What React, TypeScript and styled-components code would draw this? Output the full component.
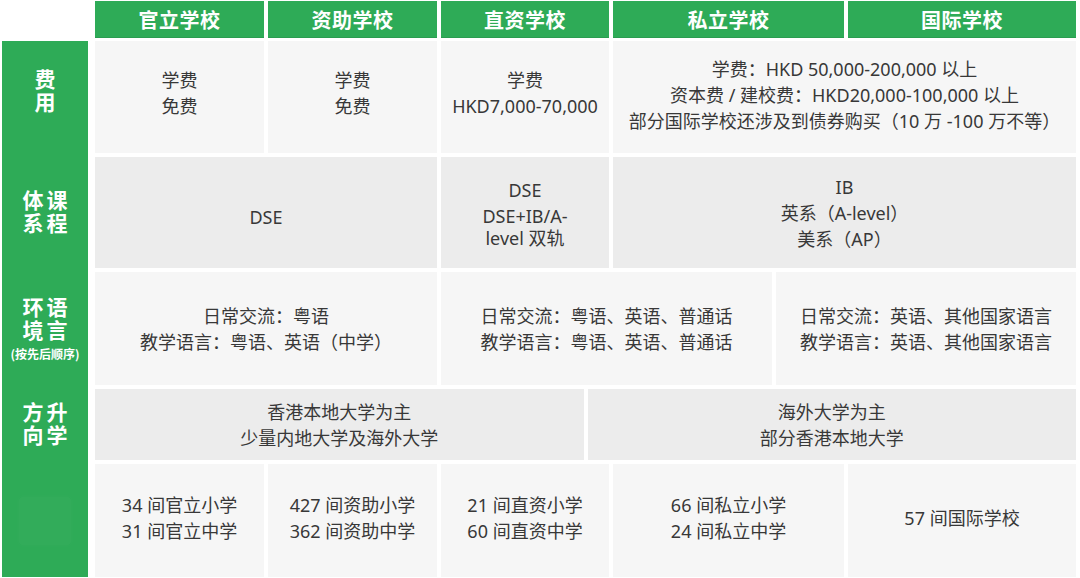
import React from "react";
import styled, { createGlobalStyle } from "styled-components";

const GREEN = "#2eab57";
const COLS = "169px 169px 168px 231px 1fr";

const GlobalStyle = createGlobalStyle`
  html, body {
    margin: 0;
    padding: 0;
    background: #ffffff;
  }
  body {
    font-family: "Noto Sans", "Noto Sans CJK SC", sans-serif;
  }
`;

const Page = styled.div`
  width: 1080px;
  height: 578px;
  box-sizing: border-box;
  padding: 1px 4px 1px 2px;
  display: grid;
  grid-template-columns: 86px 1fr;
  grid-template-rows: 37px 1fr;
  column-gap: 7px;
  row-gap: 3px;
`;

const HeaderRow = styled.div`
  grid-column: 2;
  grid-row: 1;
  display: grid;
  grid-template-columns: ${COLS};
  gap: 4px;
`;

const HeaderCell = styled.div`
  background: ${GREEN};
  color: #ffffff;
  font-family: "Noto Sans CJK SC", sans-serif;
  font-weight: 700;
  font-size: 20px;
  letter-spacing: 0.5px;
  display: flex;
  align-items: center;
  justify-content: center;
  box-shadow: inset 0 -1px 0 rgba(0, 0, 0, 0.08);
`;

const LabelColumn = styled.div`
  grid-column: 1;
  grid-row: 2;
  background: ${GREEN};
  display: grid;
  grid-template-rows: 112px 111px 113px 71px 113px;
  row-gap: 4px;
`;

const Label = styled.div<{ $lift?: number }>`
  display: flex;
  flex-direction: column;
  align-items: center;
  justify-content: center;
  padding-bottom: ${({ $lift }) => $lift ?? 0}px;
  color: #ffffff;
  font-family: "Noto Sans CJK SC", sans-serif;
  font-weight: 700;
  text-align: center;
`;

/* vertical text, read right column first: 课程体系 -> 课程 | 体系 */
const LabelText = styled.div`
  writing-mode: vertical-rl;
  height: 47px;
  font-size: 21px;
  line-height: 24px;
  letter-spacing: 2px;
`;

const Caption = styled.div`
  font-size: 12px;
  line-height: 14px;
  margin-top: 3px;
  white-space: nowrap;
`;

const Watermark = styled.div`
  width: 52px;
  height: 48px;
  border-radius: 4px;
  background: rgba(255, 255, 255, 0.025);
  box-shadow: 0 0 6px rgba(255, 255, 255, 0.03);
`;

const Body = styled.div`
  grid-column: 2;
  grid-row: 2;
  display: grid;
  grid-template-rows: 112px 111px 113px 71px 113px;
  row-gap: 4px;
`;

const Row = styled.div<{ $cols: string }>`
  display: grid;
  grid-template-columns: ${({ $cols }) => $cols};
  gap: 4px;
`;

const Cell = styled.div<{ $span?: number; $dark?: boolean; $lift?: number }>`
  grid-column: span ${({ $span }) => $span ?? 1};
  background: ${({ $dark }) => ($dark ? "#ececec" : "#f6f6f6")};
  display: flex;
  flex-direction: column;
  align-items: center;
  justify-content: center;
  padding-bottom: ${({ $lift }) => Math.max($lift ?? 0, 0)}px;
  padding-top: ${({ $lift }) => Math.max(-($lift ?? 0), 0)}px;
  color: #383838;
  font-size: 18px;
  line-height: 26px;
  text-align: center;
  white-space: nowrap;
`;

const Wrapped = styled.div`
  line-height: 22px;
  margin-top: 2px;
`;

const headers = ["官立学校", "资助学校", "直资学校", "私立学校", "国际学校"];

const labels: { text: string; caption?: string; lift?: number }[] = [
  { text: "费用", lift: 10 },
  { text: "课程体系" },
  { text: "语言环境", caption: "(按先后顺序)" },
  { text: "升学方向" },
];

const counts: string[][] = [
  ["34 间官立小学", "31 间官立中学"],
  ["427 间资助小学", "362 间资助中学"],
  ["21 间直资小学", "60 间直资中学"],
  ["66 间私立小学", "24 间私立中学"],
  ["57 间国际学校"],
];

const Lines: React.FC<{ lines: string[] }> = ({ lines }) => (
  <>
    {lines.map((l) => (
      <div key={l}>{l}</div>
    ))}
  </>
);

export default function App() {
  return (
    <>
      <GlobalStyle />
      <Page>
        <HeaderRow>
          {headers.map((h) => (
            <HeaderCell key={h}>{h}</HeaderCell>
          ))}
        </HeaderRow>

        <LabelColumn>
          {labels.map((lb) => (
            <Label key={lb.text} $lift={lb.lift}>
              <LabelText>{lb.text}</LabelText>
              {lb.caption && <Caption>{lb.caption}</Caption>}
            </Label>
          ))}
          <Label>
            <Watermark />
          </Label>
        </LabelColumn>

        <Body>
          <Row $cols={COLS}>
            <Cell $lift={8}>
              <Lines lines={["学费", "免费"]} />
            </Cell>
            <Cell $lift={8}>
              <Lines lines={["学费", "免费"]} />
            </Cell>
            <Cell $lift={8}>
              <Lines lines={["学费", "HKD7,000-70,000"]} />
            </Cell>
            <Cell $span={2} $lift={4}>
              <Lines
                lines={[
                  "学费：HKD 50,000-200,000 以上",
                  "资本费 / 建校费：HKD20,000-100,000 以上",
                  "部分国际学校还涉及到债券购买（10 万 -100 万不等）",
                ]}
              />
            </Cell>
          </Row>

          <Row $cols={COLS}>
            <Cell $span={2} $dark $lift={-8}>
              DSE
            </Cell>
            <Cell $dark>
              <div>DSE</div>
              <Wrapped>
                DSE+IB/A-
                <br />
                level 双轨
              </Wrapped>
            </Cell>
            <Cell $span={2} $dark>
              <Lines lines={["IB", "英系（A-level）", "美系（AP）"]} />
            </Cell>
          </Row>

          <Row $cols="342px 331px 1fr">
            <Cell>
              <Lines lines={["日常交流：粤语", "教学语言：粤语、英语（中学）"]} />
            </Cell>
            <Cell>
              <Lines
                lines={["日常交流：粤语、英语、普通话", "教学语言：粤语、英语、普通话"]}
              />
            </Cell>
            <Cell>
              <Lines
                lines={["日常交流：英语、其他国家语言", "教学语言：英语、其他国家语言"]}
              />
            </Cell>
          </Row>

          <Row $cols="1fr 1fr">
            <Cell $dark>
              <Lines lines={["香港本地大学为主", "少量内地大学及海外大学"]} />
            </Cell>
            <Cell $dark>
              <Lines lines={["海外大学为主", "部分香港本地大学"]} />
            </Cell>
          </Row>

          <Row $cols={COLS}>
            {counts.map((c) => (
              <Cell key={c[0]} $lift={5}>
                <Lines lines={c} />
              </Cell>
            ))}
          </Row>
        </Body>
      </Page>
    </>
  );
}
